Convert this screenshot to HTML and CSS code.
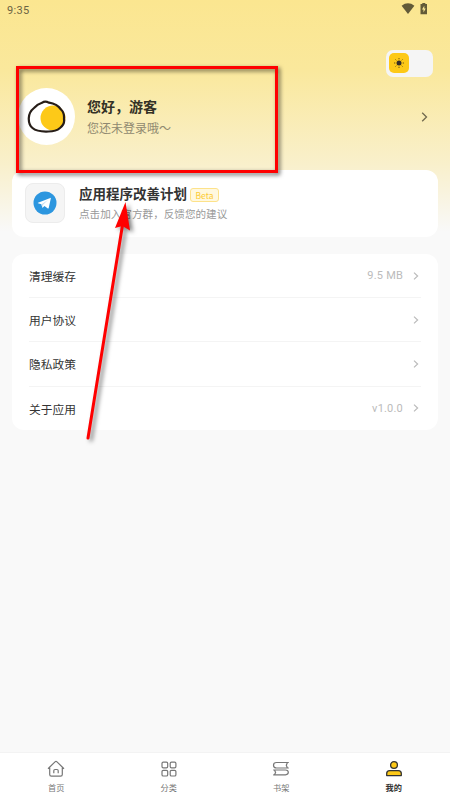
FILE: index.html
```html
<!DOCTYPE html>
<html lang="zh-CN">
<head>
<meta charset="utf-8">
<title>我的</title>
<link rel="stylesheet" href="styles.css">
</head>
<body>
<div class="app">
  <header class="status">
    <span>9:35</span>
    <span class="status-icons">
      <svg width="14" height="12" viewBox="0 0 14 12"><path d="M.6 2.7Q7-2.2 13.4 2.7L7 11Z" fill="#625a38"/></svg>
      <svg width="8" height="12" viewBox="0 0 8 12"><path d="M2.3 0h3v1H7v10.3H.5V1h1.800Z" fill="#625a38"/><path d="M4.300 2.800 2 6.500h1.500v3L5.700 5.600H4.300Z" fill="#fae897"/></svg>
    </span>
  </header>
  <div class="theme-row">
    <div class="toggle"><div class="thumb">
      <svg width="12" height="12" viewBox="0 0 12 12"><circle cx="6" cy="6" r="2.500" fill="#332c28"/><path d="M6 1v1.300M6 9.700V11M1 6h1.300M9.700 6H11M2.500 2.500l.8.8M8.700 8.700l.8.8M9.500 2.500l-.8.8M3.300 8.700l-.8.8" stroke="#5d4918" stroke-width=".9"/></svg>
    </div></div>
  </div>
  <section class="profile">
    <div class="avatar">
      <svg width="40" height="34" viewBox="0 0 40 34"><circle cx="26" cy="18" r="12.500" fill="#fdc918"/><path d="M15 2.800Q18 .6 22 2.700Q30 3.800 34 9.500Q37.500 12.500 37 19Q38 24 33 28Q29 31.500 21.500 31.500Q10 32 5.500 28Q1.500 24.500 1.800 18Q2 12 7 8Q11 4 15 2.800Z" fill="none" stroke="#261d18" stroke-width="2.200"/></svg>
    </div>
    <div class="who"><h1>您好，游客</h1><p>您还未登录哦～</p></div>
    <svg class="go" width="7" height="10" viewBox="0 0 7 10"><path d="M1.200.8 5.500 5 1.200 9.200" fill="none" stroke="#70694e" stroke-width="1.300"/></svg>
  </section>
  <main>
    <section class="card promo">
      <div class="promo-icon">
        <svg width="24" height="24" viewBox="0 0 24 24"><circle cx="12" cy="12" r="11.500" fill="#2c96df"/><path d="M5 11.700 17.300 6.900Q18 6.700 17.800 7.600L15.700 17Q15.400 18 14.500 17.300L11.500 15 9.900 16.600Q9.300 17 9.200 16.200L8.400 13.200 5 12.200Q4.500 12 5 11.700Z" fill="#fff"/><path d="m8.500 13.200 6.500-4.200-5.200 4.900-.5 2.500" fill="#c5dff2"/></svg>
      </div>
      <div class="promo-text">
        <div class="promo-title"><h2>应用程序改善计划</h2><span class="beta">Beta</span></div>
        <p>点击加入官方群，反馈您的建议</p>
      </div>
    </section>
    <section class="card list">
      <div class="row"><span>清理缓存</span><span class="value">9.5 MB</span><svg width="6" height="8" viewBox="0 0 6 8"><path d="M1 .6 4.600 4 1 7.400"/></svg></div>
      <div class="row"><span>用户协议</span><span class="value"></span><svg width="6" height="8" viewBox="0 0 6 8"><path d="M1 .6 4.600 4 1 7.400"/></svg></div>
      <div class="row"><span>隐私政策</span><span class="value"></span><svg width="6" height="8" viewBox="0 0 6 8"><path d="M1 .6 4.600 4 1 7.400"/></svg></div>
      <div class="row"><span>关于应用</span><span class="value">v1.0.0</span><svg width="6" height="8" viewBox="0 0 6 8"><path d="M1 .6 4.600 4 1 7.400"/></svg></div>
    </section>
  </main>
  <nav class="tabs">
    <div class="tab">
      <svg width="18" height="18" viewBox="0 0 18 18"><path d="M2.700 7.700v6.800q0 1.700 1.700 1.700h9.200q1.700 0 1.700-1.700V7.700M1 8.800 8 1.900q1-.9 2 0l7 6.900M6.800 13.300v-2.500q0-1.300 1.200-1.300h2q1.200 0 1.200 1.300v2.500"/></svg>
      <span>首页</span>
    </div>
    <div class="tab">
      <svg width="18" height="18" viewBox="0 0 18 18"><rect x="2" y="2.200" width="5.700" height="5.700" rx="1.300"/><rect x="10.200" y="2.200" width="5.700" height="5.700" rx="1.300"/><rect x="2" y="10.300" width="5.700" height="5.700" rx="1.300"/><rect x="10.200" y="10.300" width="5.700" height="5.700" rx="1.300"/></svg>
      <span>分类</span>
    </div>
    <div class="tab">
      <svg width="18" height="18" viewBox="0 0 18 18"><path d="M16.800 2.500H4.500Q1.500 2.500 1.500 5.200T4.500 8H16.800M15.300 2.700l-1 2.500 1 2.500M1.200 10H13.500Q16.300 10 16.300 12.300T13.500 14.800H1.200M2.600 10.200l1 2.200-1 2.200"/></svg>
      <span>书架</span>
    </div>
    <div class="tab active">
      <svg width="18" height="18" viewBox="0 0 18 18"><circle cx="9" cy="5" r="3.400"/><path d="M1.700 15.600v-2.100q0-2.900 3-2.900h8.600q3 0 3 2.900v2.100Z"/></svg>
      <span>我的</span>
    </div>
  </nav>
  <div class="highlight"></div>
  <svg class="arrow" width="450" height="800" viewBox="0 0 450 800"><path d="M88 438 123 222" stroke="#f00" stroke-width="3" stroke-linecap="round"/><path d="M125.500 202 130 230.500 122.500 226 115 228Z" fill="#f00"/></svg>
</div>
</body>
</html>
```

FILE: styles.css
```css
* { box-sizing: border-box; }
body { margin: 0; }
h1, h2, p { margin: 0; }
svg { display: block; flex: none; }
.app {
  position: relative;
  width: 450px;
  height: 800px;
  overflow: hidden;
  display: flex;
  flex-direction: column;
  font-family: Roboto, "Noto Sans CJK SC", sans-serif;
  background: linear-gradient(#fbe690 0, #fae89c 70px, #f9f0cc 165px, #f9f3dc 190px, #f9f9f9 232px);
}
.status {
  height: 20px;
  padding: 0 22px 0 7px;
  display: flex;
  justify-content: space-between;
  align-items: center;
  font-size: 11px;
  letter-spacing: .35px;
  color: #6b6343;
}
.status-icons { display: flex; gap: 5px; padding-bottom: 2px; }
.theme-row { height: 68px; padding: 30px 17px 0 0; display: flex; justify-content: flex-end; }
.toggle { width: 47px; height: 27px; padding: 3px; border-radius: 7px; background: #f5f5f5; }
.thumb {
  width: 20px;
  height: 20px;
  border-radius: 5px;
  background: #fdc918;
  display: flex;
  align-items: center;
  justify-content: center;
}
.profile { height: 82px; padding: 0 22px 0 18px; display: flex; align-items: flex-start; }
.avatar {
  width: 57px;
  height: 57px;
  border-radius: 50%;
  background: #fff;
  display: flex;
  align-items: center;
  justify-content: center;
}
.who { flex: 1; padding: 8px 0 0 12px; }
.who h1 { font-size: 14px; line-height: 22px; font-weight: 700; color: #333126; }
.who p { font-size: 12px; line-height: 22px; color: #8f8970; }
.go { margin-top: 24px; }
main { flex: 1; padding: 0 12px; }
.card { background: #fff; border-radius: 12px; }
.promo { height: 67px; padding: 13px; display: flex; }
.promo-icon {
  width: 40px;
  height: 40px;
  border: 1px solid #ececec;
  border-radius: 8px;
  background: #f5f5f5;
  display: flex;
  align-items: center;
  justify-content: center;
}
.promo-text { padding-left: 14px; }
.promo-title { height: 23px; display: flex; align-items: center; gap: 3px; }
.promo h2 { font-size: 13.500px; line-height: 23px; font-weight: 700; color: #333; }
.beta {
  width: 29px;
  height: 14px;
  border: 1px solid #fde28a;
  border-radius: 3px;
  background: #fff8df;
  color: #fccb35;
  font: 8.500px/12px "Noto Sans CJK SC", sans-serif;
  text-align: center;
}
.promo p { font-size: 10.600px; line-height: 18px; color: #999; }
.list { height: 176px; margin-top: 17px; padding: 0 17px; }
.row {
  height: 44.200px;
  padding-right: 2px;
  display: flex;
  align-items: center;
  font-size: 11.750px;
  color: #333;
  border-bottom: 1px solid #f4f4f4;
}
.row:last-child { height: 43.400px; border-bottom: 0; }
.value { margin-left: auto; margin-right: 10px; font-size: 11px; letter-spacing: .2px; color: #bbb; }
.row path { fill: none; stroke: #bbb; stroke-width: 1.200; }
.tabs {
  height: 48px;
  border-top: 1px solid #f3f3f3;
  background: #fff;
  display: grid;
  grid-template-columns: repeat(4, 1fr);
}
.tab {
  padding-top: 7px;
  display: flex;
  flex-direction: column;
  align-items: center;
  font-size: 8.200px;
  line-height: 12px;
  color: #777;
}
.tab span { margin-top: 4px; }
.tab svg { fill: none; stroke: #777; stroke-width: 1.200; stroke-linejoin: round; }
.active { color: #333; font-weight: 700; }
.active svg { fill: #fdc918; stroke: #333; stroke-width: 1.300; }
.highlight {
  position: absolute;
  left: 16px;
  top: 66px;
  width: 262px;
  height: 107px;
  border: 3px solid #f00;
  filter: drop-shadow(2px 2px 2px rgba(0, 0, 0, .6));
}
.arrow { position: absolute; left: 0; top: 0; filter: drop-shadow(3px 2px 2px rgba(0, 0, 0, .5)); }
```
